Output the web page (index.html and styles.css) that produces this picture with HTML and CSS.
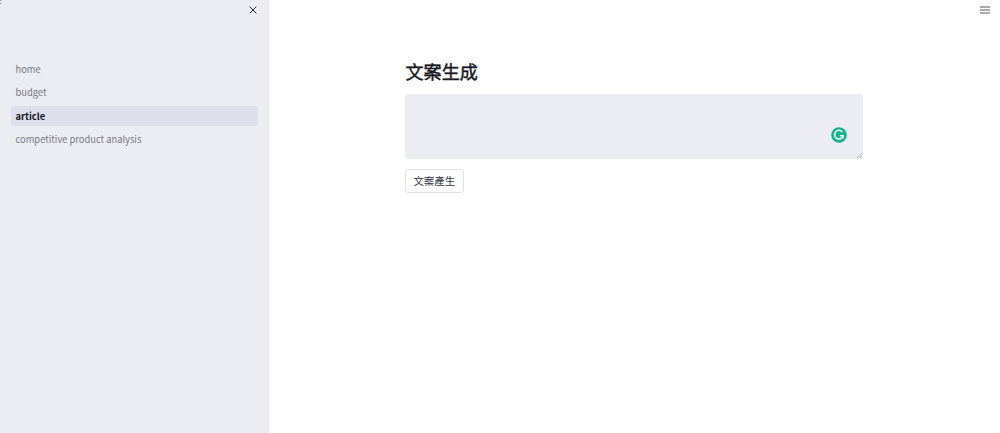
FILE: index.html
```html
<!DOCTYPE html>
<html lang="zh-Hant">
<head>
<meta charset="utf-8">
<title>文案生成</title>
<link rel="stylesheet" href="styles.css">
</head>
<body>
<div class="app">
  <aside class="sidebar">
    <svg class="corner" viewBox="0 0 3 4"><path d="M0 .5h1.5M0 3.5h2"/></svg>
    <div class="sidebar-head">
      <svg class="close" viewBox="0 0 8 8"><path d="M.6.6l6.8 6.8M7.4.6L.6 7.4"/></svg>
    </div>
    <nav class="nav">
      <a class="item">home</a>
      <a class="item">budget</a>
      <a class="item active">article</a>
      <a class="item">competitive product analysis</a>
    </nav>
  </aside>
  <main class="main">
    <header class="toolbar">
      <svg class="menu" viewBox="0 0 10 8"><path d="M0 1h10M0 4h10M0 7h10"/></svg>
    </header>
    <section class="content">
      <h1 class="title">文案生成</h1>
      <div class="field">
        <svg class="badge" viewBox="0 0 16 16"><circle cx="8" cy="8" r="7.8"/><path d="M11.3 5A4.3 4.3 0 1 0 12.1 8.7H8.8M12.1 8.2V11.2"/></svg>
        <svg class="grip" viewBox="0 0 5 5"><path d="M0 5L5 0M3 5L5 3"/></svg>
      </div>
      <button class="button">文案產生</button>
    </section>
  </main>
</div>
</body>
</html>
```
FILE: styles.css
```css
body {
  margin: 0;
  background: #fff;
  color: #31333f;
  font-family: "Noto Sans CJK TC", sans-serif;
}
.app { display: flex; height: 433px; overflow: hidden; }
.sidebar { position: relative; width: 268.5px; flex: none; background: #ebedf2; }
.corner { position: absolute; left: 0; top: 0; width: 3px; height: 4px; fill: none; stroke: #a5a6ab; }
.sidebar-head {
  display: flex;
  justify-content: flex-end;
  height: 58.5px;
  padding: 6px 11.5px 0 0;
  box-sizing: border-box;
}
.close { width: 8px; height: 8px; fill: none; stroke: #262730; }
.nav { display: flex; flex-direction: column; gap: 3px; padding: 0 10.5px; }
.item {
  height: 20.5px;
  padding-left: 5px;
  border-radius: 3px;
  font-size: 9.35px;
  line-height: 20.5px;
  color: #74767f;
}
.active { background: #dde0ea; color: #11131d; font-weight: 700; }
.main { flex: 1; display: flex; flex-direction: column; }
.toolbar {
  display: flex;
  justify-content: flex-end;
  height: 58px;
  padding: 6px 10.5px 0 0;
  box-sizing: border-box;
}
.menu { width: 10px; height: 8px; fill: none; stroke: #55565f; }
.content {
  width: 458px;
  margin-left: 136.5px;
  display: flex;
  flex-direction: column;
  align-items: flex-start;
}
.title {
  margin: -1px 0 9px;
  padding-left: .5px;
  font-size: 18.1px;
  line-height: 28px;
  font-weight: 400;
  color: #171923;
  -webkit-text-stroke: .45px #171923;
}
.field {
  position: relative;
  width: 458px;
  height: 65px;
  border-radius: 3px;
  background: #ebedf2;
}
.badge { position: absolute; right: 16px; bottom: 16px; width: 16px; height: 16px; fill: #12b58b; }
.badge path { fill: none; stroke: #fff; stroke-width: 1.5; }
.grip { position: absolute; right: 1px; bottom: 1px; width: 5px; height: 5px; fill: none; stroke: #888; stroke-width: .6; }
.button {
  margin-top: 10px;
  width: 58.5px;
  height: 24px;
  padding: 0;
  border: 1px solid #dfe0e4;
  border-radius: 3px;
  background: #fff;
  color: #31333f;
  font: 400 10.4px/20px "Noto Sans CJK TC", sans-serif;
}
```
